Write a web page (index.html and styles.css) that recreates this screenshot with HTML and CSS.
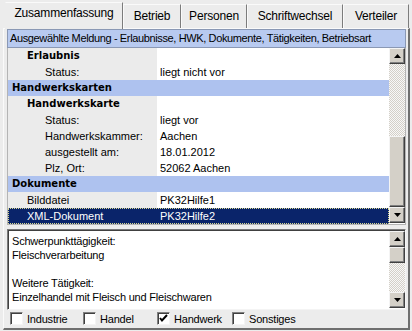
FILE: index.html
```html
<!DOCTYPE html>
<html lang="de">
<head>
    <meta charset="utf-8">
    <link rel="stylesheet" href="styles.css">
</head>
<body>
    <div class="window">
        <div class="tab-strip">
            <div class="tab active">Zusammenfassung</div>
            <div class="tab">Betrieb</div>
            <div class="tab">Personen</div>
            <div class="tab">Schriftwechsel</div>
            <div class="tab">Verteiler</div>
        </div>

        <div class="panel">
            <div class="caption">Ausgewählte Meldung - Erlaubnisse, HWK, Dokumente, Tätigkeiten, Betriebsart</div>

            <div class="grid-box">
                <div class="rows">
                    <div class="row"><div class="key lvl2 bold">Erlaubnis</div><div class="val"></div></div>
                    <div class="row"><div class="key lvl3">Status:</div><div class="val">liegt nicht vor</div></div>
                    <div class="row group"><div class="key lvl1 bold">Handwerkskarten</div><div class="val"></div></div>
                    <div class="row"><div class="key lvl2 bold">Handwerkskarte</div><div class="val"></div></div>
                    <div class="row"><div class="key lvl3">Status:</div><div class="val">liegt vor</div></div>
                    <div class="row"><div class="key lvl3">Handwerkskammer:</div><div class="val">Aachen</div></div>
                    <div class="row"><div class="key lvl3">ausgestellt am:</div><div class="val">18.01.2012</div></div>
                    <div class="row"><div class="key lvl3">Plz, Ort:</div><div class="val">52062 Aachen</div></div>
                    <div class="row group"><div class="key lvl1 bold">Dokumente</div><div class="val"></div></div>
                    <div class="row"><div class="key lvl2">Bilddatei</div><div class="val">PK32Hilfe1</div></div>
                    <div class="row selected"><div class="key lvl2">XML-Dokument</div><div class="val">PK32Hilfe2</div></div>
                </div>
                <div class="vscroll">
                    <div class="sb-btn">
                        <svg width="7" height="4" viewBox="0 0 7 4"><polygon points="0,4 3.5,0 7,4" fill="#000"/></svg>
                    </div>
                    <div class="sb-track list-track-top"></div>
                    <div class="sb-btn list-thumb"></div>
                    <div class="sb-btn">
                        <svg width="7" height="4" viewBox="0 0 7 4"><polygon points="0,0 7,0 3.5,4" fill="#000"/></svg>
                    </div>
                </div>
            </div>

            <div class="memo">
                <div class="memo-text">
                    <div>Schwerpunkttägigkeit:</div>
                    <div>Fleischverarbeitung</div>
                    <div>&nbsp;</div>
                    <div>Weitere Tätigkeit:</div>
                    <div>Einzelhandel mit Fleisch und Fleischwaren</div>
                </div>
                <div class="vscroll">
                    <div class="sb-btn">
                        <svg width="7" height="4" viewBox="0 0 7 4"><polygon points="0,4 3.5,0 7,4" fill="#000"/></svg>
                    </div>
                    <div class="sb-btn memo-thumb"></div>
                    <div class="sb-track fill"></div>
                    <div class="sb-btn">
                        <svg width="7" height="4" viewBox="0 0 7 4"><polygon points="0,0 7,0 3.5,4" fill="#000"/></svg>
                    </div>
                </div>
            </div>

            <div class="checks">
                <label class="check"><span class="box"></span>Industrie</label>
                <label class="check"><span class="box"></span>Handel</label>
                <label class="check"><span class="box"><svg width="11" height="11" viewBox="0 0 11 11"><path d="M2 5 L4 7.5 L9 2" stroke="#000" stroke-width="2" fill="none"/></svg></span>Handwerk</label>
                <label class="check"><span class="box"></span>Sonstiges</label>
            </div>
        </div>
    </div>
</body>
</html>
```

FILE: styles.css
```css
body {
    margin: 0;
    background: #ececec;
    font-family: 'Liberation Sans', Arial, sans-serif;
    font-size: 11px;
    color: #000;
}

.window {
    width: 412px;
    height: 331px;
}

/* Tabs */
.tab-strip {
    display: flex;
    align-items: flex-end;
    height: 28px;
    padding-left: 5px;
}

.tab {
    height: 24px;
    line-height: 23px;
    text-align: center;
    font-size: 12px;
    letter-spacing: -0.2px;
    border-top: 1px solid #fafafa;
    border-left: 1px solid #fafafa;
    border-right: 1px solid #7c7c7c;
    box-sizing: border-box;
}

.tab:nth-child(1) { width: 118px; }
.tab:nth-child(2) { width: 58px; }
.tab:nth-child(3) { width: 66px; }
.tab:nth-child(4) { width: 96px; }
.tab:nth-child(5) { width: 66px; }

.tab.active {
    height: 27px;
    line-height: 21px;
    border-left-color: #ececec;
    margin-bottom: -1px;
    background: #ececec;
    position: relative;
}

/* Panel */
.panel {
    margin-left: 3px;
    width: 407px;
    height: 302px;
    box-sizing: border-box;
    border-top: 1px solid #fafafa;
    border-left: 1px solid #fafafa;
    border-right: 2px solid #6f6f6f;
    border-bottom: 2px solid #6f6f6f;
    padding: 0 2px 0 3px;
    display: flex;
    flex-direction: column;
}

.caption {
    height: 19px;
    line-height: 17px;
    box-sizing: border-box;
    border: 1px solid #8a98b4;
    background: #b8caf0;
    padding-left: 2px;
    letter-spacing: -0.37px;
    white-space: nowrap;
    overflow: hidden;
}

/* Property grid */
.grid-box {
    display: flex;
    height: 177px;
    box-sizing: border-box;
    border: 1px solid #b4b4b4;
    border-top: none;
    background: #fff;
}

.rows {
    flex: 1;
    overflow: hidden;
}

.row {
    display: flex;
    height: 16px;
    line-height: 16px;
    white-space: nowrap;
}

.key {
    width: 149px;
    background: #ebebeb;
    box-sizing: border-box;
}

.val {
    flex: 1;
    padding-left: 3px;
}

.lvl1 { padding-left: 4px; }
.lvl2 { padding-left: 19px; }
.lvl3 { padding-left: 37px; }

.bold {
    font-family: 'DejaVu Sans', Verdana, sans-serif;
    font-size: 10px;
    font-weight: bold;
}

.row.group .key,
.row.group .val {
    background: #aec2ef;
}

.row.selected {
    background: #0a246a;
    color: #fff;
    outline: 1px dotted #d8d890;
    outline-offset: -1px;
}

.row.selected .key {
    background: transparent;
}

/* Scrollbars */
.vscroll {
    width: 16px;
    display: flex;
    flex-direction: column;
}

.sb-btn {
    height: 16px;
    box-sizing: border-box;
    background: #d4d0c8;
    border: 1px solid;
    border-color: #f4f4f4 #404040 #404040 #f4f4f4;
    box-shadow: inset -1px -1px #808080;
    display: flex;
    align-items: center;
    justify-content: center;
}

.sb-track {
    background: repeating-conic-gradient(#d4d0c8 0% 25%, #f8f8f8 0% 50%) 0 0 / 2px 2px;
}

.list-track-top { height: 72px; }
.list-thumb { height: 71px; }
.memo-thumb { height: 16px; }
.fill { flex: 1; }

/* Memo */
.memo {
    margin-top: 4px;
    height: 81px;
    display: flex;
    box-sizing: border-box;
    background: #fff;
    border: 1px solid;
    border-color: #7a7a7a #f4f4f4 #f4f4f4 #7a7a7a;
    box-shadow: inset 1px 1px #404040;
    padding: 1px 0 1px 1px;
}

.memo-text {
    flex: 1;
    padding: 3px 0 0 3px;
    line-height: 14px;
    letter-spacing: -0.2px;
}

/* Checkboxes */
.checks {
    display: flex;
    padding: 2px 0 0 3px;
}

.check {
    display: flex;
    align-items: center;
    letter-spacing: -0.2px;
}

.check:nth-child(1) { width: 73px; }
.check:nth-child(2) { width: 74px; }
.check:nth-child(3) { width: 75px; }

.box {
    width: 13px;
    height: 13px;
    box-sizing: border-box;
    background: #fff;
    border: 1px solid;
    border-color: #808080 #f4f4f4 #f4f4f4 #808080;
    box-shadow: inset 1px 1px #404040;
    margin-right: 4px;
    display: flex;
    align-items: center;
    justify-content: center;
}
```
